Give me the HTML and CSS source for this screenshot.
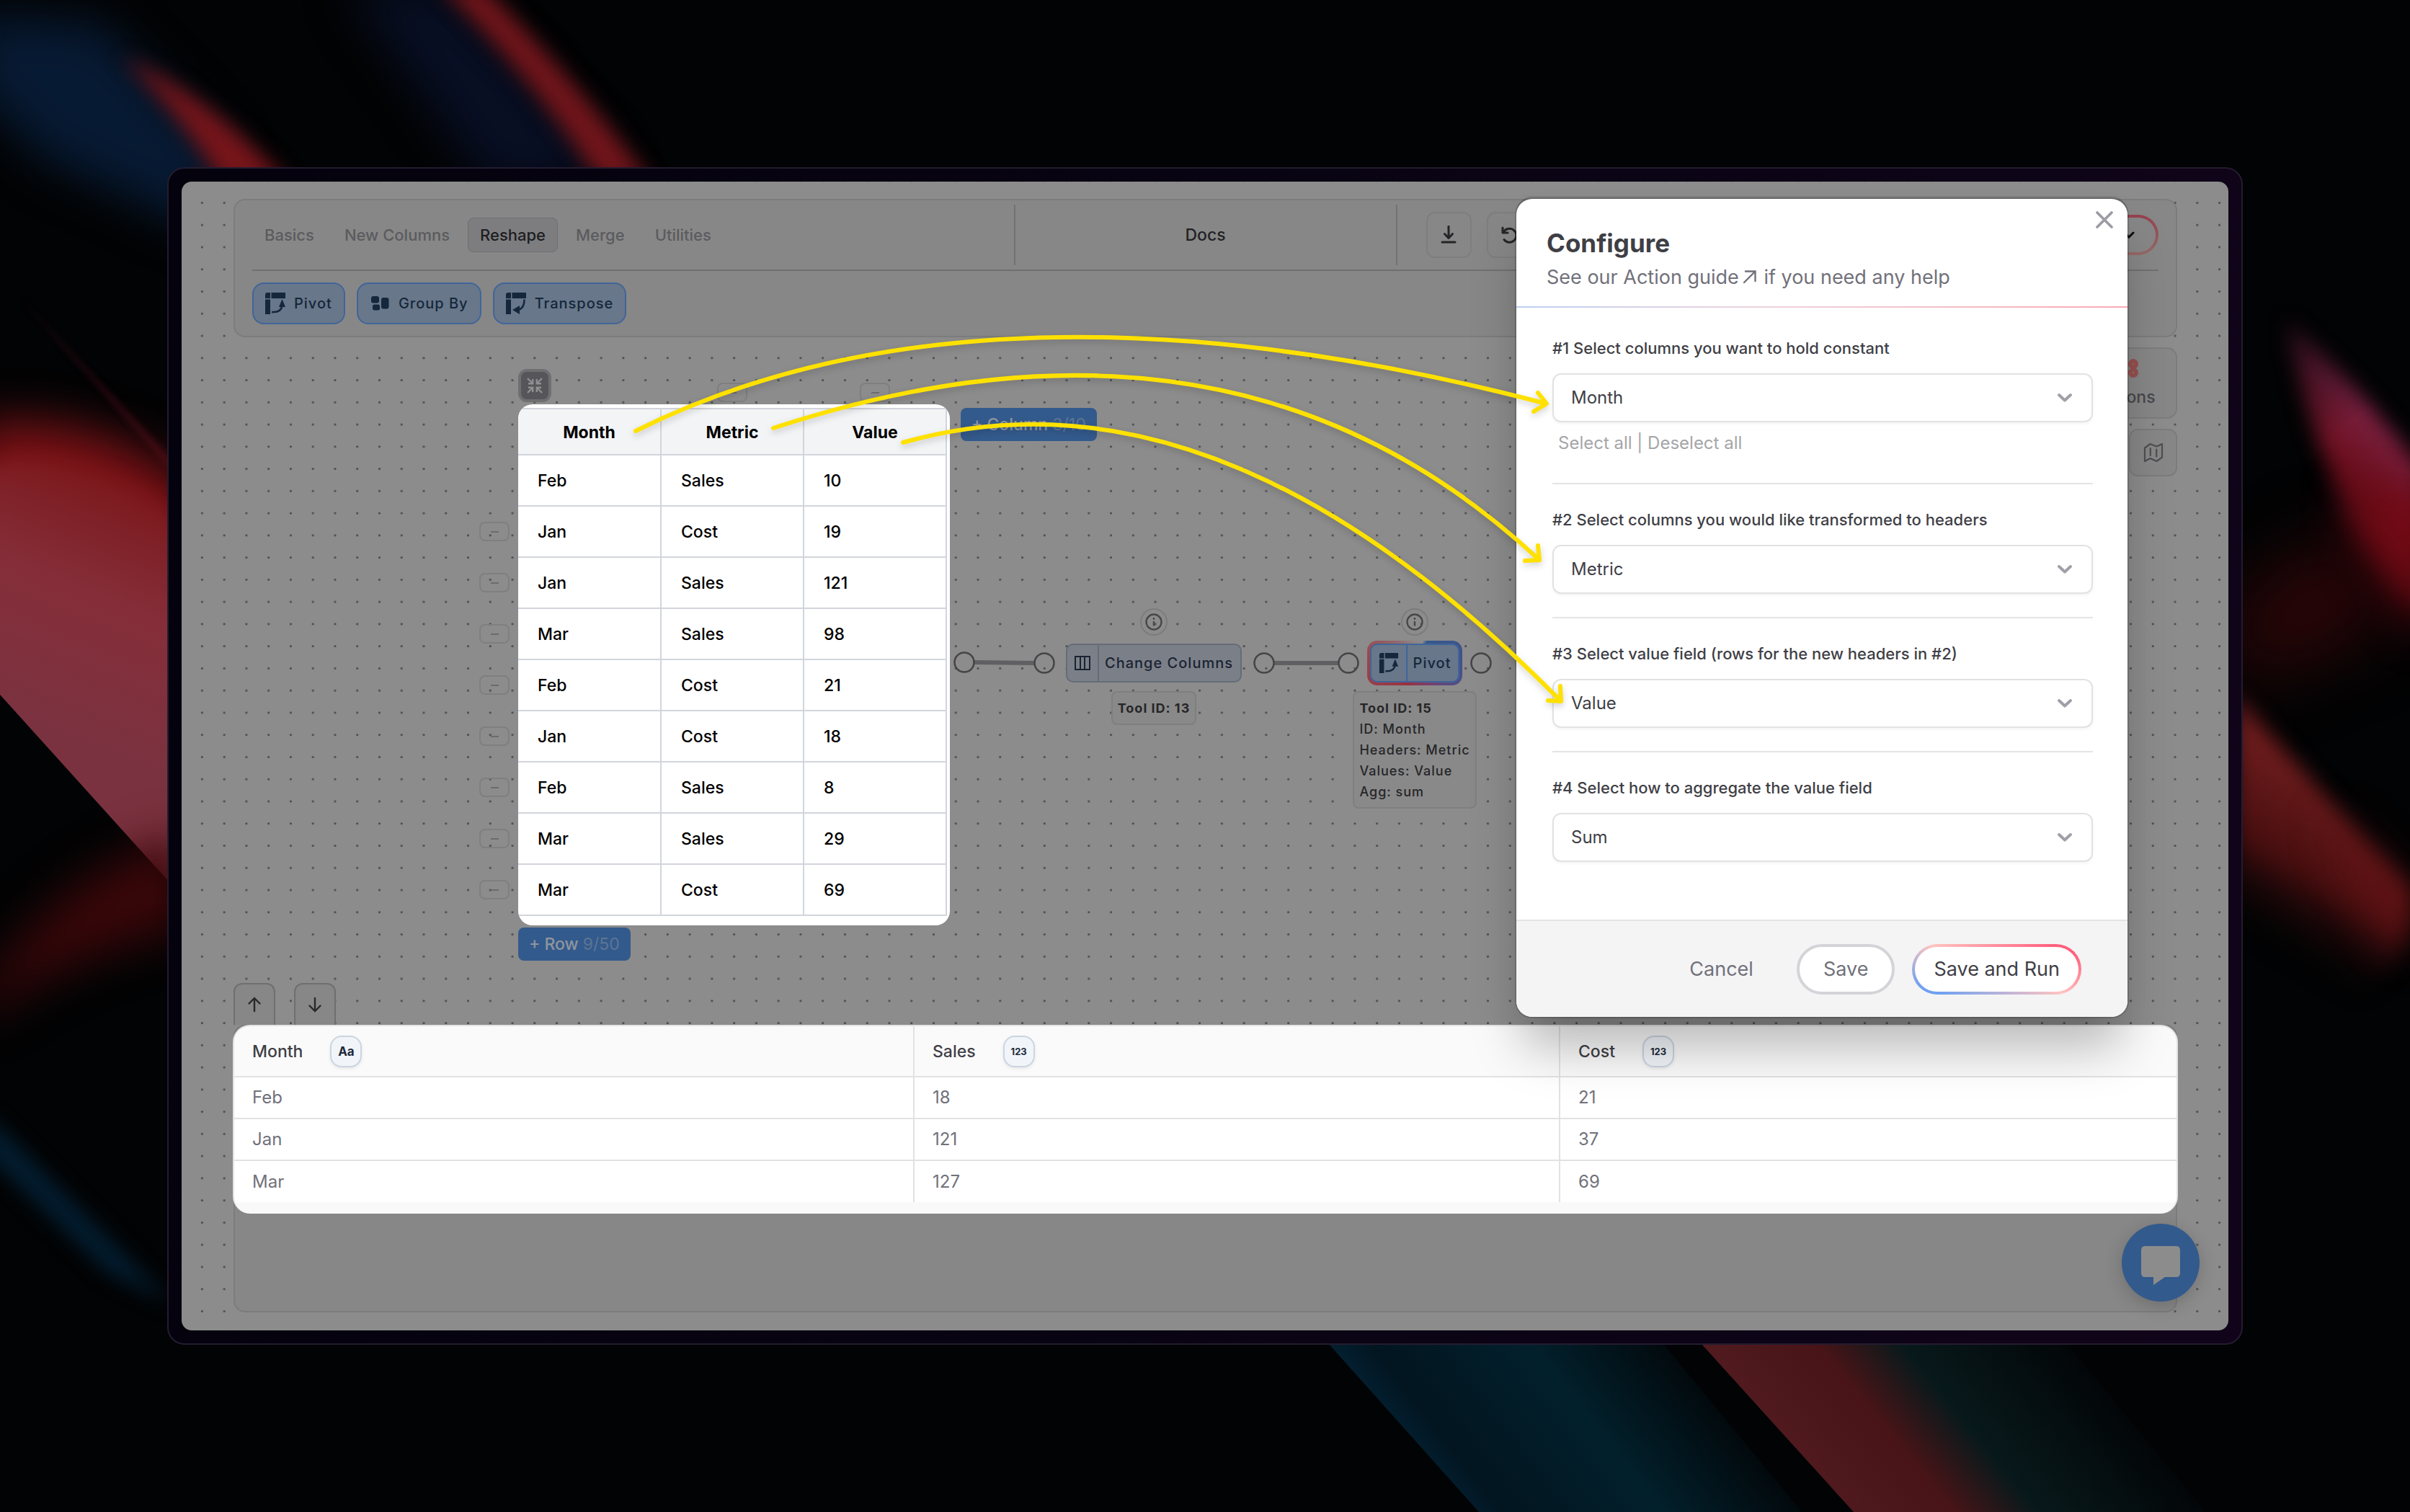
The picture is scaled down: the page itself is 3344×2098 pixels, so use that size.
FILE: index.html
```html
<!DOCTYPE html>
<html lang="en">
<head>
<meta charset="utf-8">
<title>Docs – Pivot</title>
<link rel="stylesheet" href="styles.css">
</head>
<body>
<svg class="wallpaper" viewBox="0 0 3344 2098" preserveAspectRatio="none" aria-hidden="true">
  <defs>
    <filter id="soft4" x="-50%" y="-50%" width="200%" height="200%"><feGaussianBlur stdDeviation="4"/></filter>
    <filter id="soft10" x="-50%" y="-50%" width="200%" height="200%"><feGaussianBlur stdDeviation="14"/></filter>
    <filter id="soft30" x="-50%" y="-50%" width="200%" height="200%"><feGaussianBlur stdDeviation="32"/></filter>
    <filter id="soft60" x="-80%" y="-80%" width="260%" height="260%"><feGaussianBlur stdDeviation="50"/></filter>
    <linearGradient id="petal" gradientUnits="userSpaceOnUse" x1="40" y1="1000" x2="200" y2="600">
      <stop offset="0" stop-color="#7b3240"/><stop offset=".45" stop-color="#852e39"/><stop offset=".8" stop-color="#7c1a1e"/><stop offset="1" stop-color="#66090c"/>
    </linearGradient>
    <linearGradient id="blueBand" gradientUnits="userSpaceOnUse" x1="1900" y1="1960" x2="2230" y2="1700">
      <stop offset="0" stop-color="#042235"/><stop offset=".15" stop-color="#021520"/><stop offset=".55" stop-color="#02202c"/><stop offset="1" stop-color="#020406"/>
    </linearGradient>
    <linearGradient id="redBand" gradientUnits="userSpaceOnUse" x1="2440" y1="1960" x2="2760" y2="1700">
      <stop offset="0" stop-color="#501a1f"/><stop offset=".3" stop-color="#481417"/><stop offset=".52" stop-color="#08191b"/><stop offset="1" stop-color="#020406"/>
    </linearGradient>
    <linearGradient id="redRight" gradientUnits="userSpaceOnUse" x1="3240" y1="1100" x2="3120" y2="1300">
      <stop offset="0" stop-color="#6b1b1c"/><stop offset=".5" stop-color="#470e0f"/><stop offset="1" stop-color="#020304" stop-opacity="0"/>
    </linearGradient>
    <linearGradient id="pinkRight" gradientUnits="userSpaceOnUse" x1="3344" y1="600" x2="3210" y2="760">
      <stop offset="0" stop-color="#7c2347"/><stop offset=".45" stop-color="#6b0f1d"/><stop offset="1" stop-color="#180304"/>
    </linearGradient>
    <linearGradient id="tipFade" gradientUnits="userSpaceOnUse" x1="3170" y1="440" x2="3270" y2="580">
      <stop offset="0" stop-color="#333"/><stop offset="1" stop-color="#fff"/>
    </linearGradient>
    <mask id="tip"><rect x="3100" y="300" width="300" height="800" fill="url(#tipFade)"/></mask>
  </defs>
  <rect width="3344" height="2098" fill="#020304"/>
  <path d="M-40 20L140 30L320 220L280 320L60 220L-40 120Z" fill="#071a33" filter="url(#soft30)"/>
  <path d="M170 80Q290 130 400 255L310 260Q260 170 170 80Z" fill="#76151a" filter="url(#soft10)"/>
  <path d="M480 -20L620 -20L860 250L680 260Z" fill="#080f24" filter="url(#soft30)"/>
  <path d="M610 -20L670 -20Q800 110 905 255L830 250Q740 110 610 -20Z" fill="#70151a" filter="url(#soft10)"/>
  <path d="M30 415L240 640L236 650Z" fill="#2e0a13" filter="url(#soft4)"/>
  <path d="M-40 590Q140 560 280 690L280 1000L-40 850Z" fill="#7c1216" filter="url(#soft30)"/>
  <path d="M-40 650Q130 610 280 750L280 1274L-40 928Z" fill="url(#petal)" filter="url(#soft10)"/>
  <path d="M-40 740L280 840V1274L0 964L-40 920Z" fill="url(#petal)"/>
  <path d="M-40 920L0 964L260 1252V1360L-40 1060Z" fill="#020304"/>
  <path d="M-40 1400Q80 1200 260 1160L260 1290Q120 1310 -40 1420Z" fill="#3a0709" filter="url(#soft30)"/>
  <path d="M-20 1545L240 1810L150 1765L-20 1600Z" fill="#031f33" filter="url(#soft10)"/>
  <g mask="url(#tip)"><path d="M3168 439Q3270 530 3364 655V850Q3240 760 3168 439Z" fill="url(#pinkRight)" filter="url(#soft10)"/></g>
  <path d="M3370 700L3370 880Q3290 800 3250 690Z" fill="#7a0a15" filter="url(#soft30)"/>
  <path d="M3100 840L3250 740L3320 860L3100 950Z" fill="#300608" filter="url(#soft60)"/>
  <path d="M3100 962L3344 1234Q3360 1400 3100 1440Z" fill="url(#redRight)" filter="url(#soft10)"/>
  <path d="M3230 1130L3344 1250V1320Q3290 1260 3230 1130Z" fill="#6a1216" filter="url(#soft30)"/>
  <path d="M1835 1855L2300 1855L2500 2098L2052 2098Z" fill="url(#blueBand)"/>
  <path d="M2352 1855L2860 1855L3060 2098L2572 2098Z" fill="url(#redBand)"/>
</svg>

<main class="device">
  <div class="screen">
    <svg class="dots" aria-hidden="true"><defs><pattern id="dot" x="13" y="14" width="30.76" height="30.76" patternUnits="userSpaceOnUse"><circle cx="15.4" cy="15.4" r="1.6" fill="#4d4d4f"/></pattern></defs><rect width="100%" height="100%" fill="url(#dot)"/></svg>

    <header class="toolbar">
      <div class="toolbar-top">
        <nav class="tabs" aria-label="Tool groups">
          <button class="tab">Basics</button>
          <button class="tab">New Columns</button>
          <button class="tab tab-active">Reshape</button>
          <button class="tab">Merge</button>
          <button class="tab">Utilities</button>
        </nav>
        <div class="doc-title"><span>Docs</span></div>
        <div class="actions">
          <button class="icon-button" aria-label="Download"><svg width="24" height="26" viewBox="0 0 24 26" fill="none" stroke="#252528" stroke-width="3"><path d="M12 1V17M6.500 11.500L12 17.500L17.500 11.500M3 23H21" stroke-linecap="round" stroke-linejoin="round"/></svg></button>
          <button class="icon-button" aria-label="Undo"><svg width="24" height="24" viewBox="0 0 24 24" fill="none" stroke="#252528" stroke-width="3" stroke-linecap="round" stroke-linejoin="round"><path d="M3 2V9H10M4 8.500A9.500 9.500 0 1 1 5 18.500"/></svg></button>
          <button class="run-button">Run <svg width="16" height="10" viewBox="0 0 16 10" fill="none" stroke="#0c0c0d" stroke-width="3" stroke-linecap="round"><path d="M2 2L8 8L14 2"/></svg></button>
        </div>
      </div>
      <div class="tools">
        <button class="tool"><svg width="28" height="30" viewBox="0 0 28 30" fill="#14273b"><path d="M0 3Q0 0 3 0H7V8H0ZM8.500 0H28V8H8.500ZM0 9.500H7V30H0Z"/><path d="M19 20L23.500 9L28 20Z"/><path d="M9 27Q22 28 23.500 18" fill="none" stroke="#14273b" stroke-width="2.500"/></svg>Pivot</button>
        <button class="tool"><svg width="28" height="20" viewBox="0 0 28 20" fill="#14273b"><rect x="2" width="11" height="9.500" rx="3"/><rect x="4" y="11.500" width="10" height="8" rx="2.500"/><rect x="16" y="2" width="10.500" height="15.500" rx="3"/></svg>Group By</button>
        <button class="tool"><svg width="28" height="30" viewBox="0 0 28 30" fill="#14273b"><path d="M0 3Q0 0 3 0H7V8H0ZM8.500 0H28V8H8.500ZM0 9.500H7V30H0Z"/><path d="M9 24L19 18V30Z"/><path d="M17 24.500Q26 21 25.500 9.500" fill="none" stroke="#14273b" stroke-width="2.500"/></svg>Transpose</button>
      </div>
    </header>

    <section class="canvas" aria-label="Workflow">
      <aside class="side-tools">
        <button class="side-card"><svg width="36" height="26" viewBox="0 0 36 26" fill="none" stroke="#96504f" stroke-width="6"><circle cx="9" cy="13" r="6"/><circle cx="29" cy="7" r="4"/><circle cx="29" cy="19" r="4"/></svg>Actions</button>
        <button class="side-map" aria-label="Map"><svg width="28" height="28" viewBox="0 0 28 28" fill="none" stroke="#4f4f52" stroke-width="2.200" stroke-linejoin="round"><path d="M2 7.500L9.500 2L18.500 5.500L26 2V20.500L18.500 26L9.500 22L2 26ZM9.800 8V18M18.200 9.500V19.500" stroke-linecap="round"/></svg></button>
      </aside>

      <div class="table-node">
        <div class="node-head">
          <button class="collapse" aria-label="Collapse"><svg width="22" height="22" viewBox="0 0 22 22" fill="none" stroke="#8f8f92" stroke-width="2.400"><path d="M1 1L7.500 7.500M2 8.200H8.200V2M21 1L14.500 7.500M20 8.200H13.800V2M1 21L7.500 14.500M2 13.800H8.200V20M21 21L14.500 14.500M20 13.800H13.800V20"/></svg></button>
          <button class="minus" aria-label="Remove Metric"></button>
          <button class="minus" aria-label="Remove Value"></button>
        </div>
        <div class="row-minuses">
          <button class="minus" aria-label="Remove row 2"></button>
          <button class="minus" aria-label="Remove row 3"></button>
          <button class="minus" aria-label="Remove row 4"></button>
          <button class="minus" aria-label="Remove row 5"></button>
          <button class="minus" aria-label="Remove row 6"></button>
          <button class="minus" aria-label="Remove row 7"></button>
          <button class="minus" aria-label="Remove row 8"></button>
          <button class="minus" aria-label="Remove row 9"></button>
        </div>
        <div class="input-card">
          <table class="input-table">
            <thead><tr><th>Month</th><th>Metric</th><th>Value</th></tr></thead>
            <tbody>
              <tr><td>Feb</td><td>Sales</td><td>10</td></tr>
              <tr><td>Jan</td><td>Cost</td><td>19</td></tr>
              <tr><td>Jan</td><td>Sales</td><td>121</td></tr>
              <tr><td>Mar</td><td>Sales</td><td>98</td></tr>
              <tr><td>Feb</td><td>Cost</td><td>21</td></tr>
              <tr><td>Jan</td><td>Cost</td><td>18</td></tr>
              <tr><td>Feb</td><td>Sales</td><td>8</td></tr>
              <tr><td>Mar</td><td>Sales</td><td>29</td></tr>
              <tr><td>Mar</td><td>Cost</td><td>69</td></tr>
            </tbody>
          </table>
        </div>
        <button class="add add-column">+ Column <span>3/10</span></button>
        <button class="add add-row">+ Row <span>9/50</span></button>
      </div>

      <svg class="wires" width="760" height="40" viewBox="1320 900 760 40" fill="none" stroke="#454547" stroke-width="2.500" aria-hidden="true">
        <path d="M1352 919L1435 920M1768 920H1857" stroke="#606062" stroke-width="6"/>
        <circle cx="1338" cy="919" r="13.500"/><circle cx="1449" cy="920" r="13.500"/><circle cx="1754" cy="920" r="13.500"/><circle cx="1871" cy="920" r="13.500"/><circle cx="2055" cy="920" r="13.500"/>
      </svg>

      <article class="node node-change">
        <button class="info" aria-label="Info"><svg width="24" height="24" viewBox="0 0 24 24" fill="none" stroke="#48484b" stroke-width="2.400"><circle cx="12" cy="12" r="10.500"/><path d="M12 11V17.500M12 6V8.800"/></svg></button>
        <button class="node-box"><span class="node-icon"><svg width="22" height="20" viewBox="0 0 22 20" fill="none" stroke="#1b2333" stroke-width="2"><rect x="1" y="1" width="20" height="18"/><path d="M8 1V19M14 1V19"/></svg></span><span class="node-name">Change Columns</span></button>
        <div class="note"><b>Tool ID: 13</b></div>
      </article>

      <article class="node node-pivot">
        <button class="info" aria-label="Info"><svg width="24" height="24" viewBox="0 0 24 24" fill="none" stroke="#48484b" stroke-width="2.400"><circle cx="12" cy="12" r="10.500"/><path d="M12 11V17.500M12 6V8.800"/></svg></button>
        <div class="halo"><button class="node-box node-box-blue"><span class="node-icon"><svg width="28" height="28" viewBox="0 0 28 30" fill="#14273b"><path d="M0 3Q0 0 3 0H7V8H0ZM8.500 0H28V8H8.500ZM0 9.500H7V30H0Z"/><path d="M19 20L23.500 9L28 20Z"/><path d="M9 27Q22 28 23.500 18" fill="none" stroke="#14273b" stroke-width="2.500"/></svg></span><span class="node-name">Pivot</span></button></div>
        <div class="note"><b>Tool ID: 15</b><br>ID: Month<br>Headers: Metric<br>Values: Value<br>Agg: sum</div>
      </article>
    </section>

    <section class="output" aria-label="Results">
      <div class="output-tabs">
        <button aria-label="Move up"><svg width="20" height="22" viewBox="0 0 20 22" fill="none" stroke="#29292c" stroke-width="2.400" stroke-linecap="round"><path d="M10 2V20M2.500 9.500L10 2L17.500 9.500"/></svg></button>
        <button aria-label="Move down"><svg width="20" height="22" viewBox="0 0 20 22" fill="none" stroke="#29292c" stroke-width="2.400" stroke-linecap="round"><path d="M10 2V20M2.500 12.500L10 20L17.500 12.500"/></svg></button>
      </div>
      <div class="output-panel">
        <div class="result-card">
          <table class="result">
            <colgroup><col class="col-month"><col class="col-sales"><col></colgroup>
            <thead><tr><th><span>Month<i>Aa</i></span></th><th><span>Sales<i class="num">123</i></span></th><th><span>Cost<i class="num">123</i></span></th></tr></thead>
            <tbody>
              <tr><td>Feb</td><td>18</td><td>21</td></tr>
              <tr><td>Jan</td><td>121</td><td>37</td></tr>
              <tr><td>Mar</td><td>127</td><td>69</td></tr>
            </tbody>
          </table>
        </div>
      </div>
    </section>

    <button class="chat" aria-label="Chat"><svg width="56" height="54" viewBox="0 0 56 54" fill="#8c8c8c"><path d="M6 0H50Q55 0 55 6V37Q55 43 50 43H34L18 54V43H6Q1 43 1 37V6Q1 0 6 0Z"/></svg></button>

    <form class="dialog" role="dialog" aria-labelledby="dialog-title">
      <div class="dialog-head">
        <button type="button" class="close" aria-label="Close"><svg width="26" height="26" viewBox="0 0 26 26" stroke="#9c9ca4" stroke-width="3.800" stroke-linecap="round"><path d="M3 3L23 23M23 3L3 23"/></svg></button>
        <h1 id="dialog-title">Configure</h1>
        <p>See our <a href="#guide">Action guide<svg width="20" height="20" viewBox="0 0 20 20" fill="none" stroke="#71717a" stroke-width="2.400" stroke-linecap="round"><path d="M2 18L17.500 2.500M4 2.500H17.500V16"/></svg></a> if you need any help</p>
      </div>
      <div class="dialog-body">
        <div class="field">
          <label for="constant">#1 Select columns you want to hold constant</label>
          <div class="select"><select id="constant"><option>Month</option></select><svg width="22" height="14" viewBox="0 0 22 14"><path d="M3 3L11 10.500L19 3"/></svg></div>
          <p class="bulk"><a href="#all">Select all</a> | <a href="#none">Deselect all</a></p>
        </div>
        <div class="field">
          <label for="headers">#2 Select columns you would like transformed to headers</label>
          <div class="select"><select id="headers"><option>Metric</option></select><svg width="22" height="14" viewBox="0 0 22 14"><path d="M3 3L11 10.500L19 3"/></svg></div>
        </div>
        <div class="field">
          <label for="value">#3 Select value field (rows for the new headers in #2)</label>
          <div class="select"><select id="value"><option>Value</option></select><svg width="22" height="14" viewBox="0 0 22 14"><path d="M3 3L11 10.500L19 3"/></svg></div>
        </div>
        <div class="field">
          <label for="aggregate">#4 Select how to aggregate the value field</label>
          <div class="select"><select id="aggregate"><option>Sum</option></select><svg width="22" height="14" viewBox="0 0 22 14"><path d="M3 3L11 10.500L19 3"/></svg></div>
        </div>
      </div>
      <div class="dialog-foot">
        <button type="button" class="cancel">Cancel</button>
        <button type="button" class="save">Save</button>
        <button type="submit" class="save-run">Save and Run</button>
      </div>
    </form>

    <svg class="arrows" viewBox="252 252 2840 1594" fill="none" stroke="#ffe100" stroke-width="6" stroke-linecap="round" stroke-linejoin="round" aria-hidden="true">
      <path d="M882 598C1230 424 1680 438 2145 560M2134 545L2146 560L2128 571"/>
      <path d="M1073 594Q1715 384 2136 777M2134 757L2136 777L2116 778"/>
      <path d="M1253 614Q1690 490 2166 973M2165 952L2166 973L2148 972"/>
    </svg>
  </div>
</main>
</body>
</html>
```
FILE: styles.css
```css
* { box-sizing: border-box; }

body {
  margin: 0;
  padding: 232px;
  background: #020304;
  color: #3f3f46;
  font-family: Inter, "Liberation Sans", sans-serif;
  font-size: 23px;
  line-height: 30px;
}

button, select { font: inherit; color: inherit; }
button { margin: 0; padding: 0; border: 0; background: none; }
a { color: inherit; text-decoration: none; }
svg { display: block; }

.wallpaper {
  position: absolute;
  z-index: -1;
  top: 0;
  left: 0;
  width: 100%;
  height: 100%;
}
.wallpaper feGaussianBlur { color-interpolation-filters: sRGB; }

.device {
  padding: 18px;
  border: 2px solid #241c30;
  border-radius: 24px;
  background: linear-gradient(100deg, #04020d, #0a0414 60%, #11041a);
}

.screen {
  position: relative;
  display: flex;
  flex-direction: column;
  padding: 24px 71px 25px 72px;
  border-radius: 14px;
  background: #8c8c8c;
}

.dots {
  position: absolute;
  top: 0;
  left: 0;
  width: 100%;
  height: 100%;
}

/* Toolbar */
.toolbar {
  position: relative;
  padding: 0 24px;
  height: 192px;
  border: 2px solid #7c7c7c;
  border-radius: 16px;
  background: #878787;
}
.toolbar-top {
  display: grid;
  grid-template-columns: 1fr 532px 1fr;
  align-items: center;
  height: 98px;
  border-bottom: 2px solid #707070;
}
.tabs { display: flex; gap: 8px; }
.tab {
  padding: 8px 16px;
  border: 1px solid transparent;
  border-radius: 8px;
  color: #5b5b5e;
  font-size: 22px;
  font-weight: 500;
}
.tab-active { border-color: #6f6f70; background: #7d7d80; color: #1d1d20; }
.doc-title {
  display: flex;
  align-items: center;
  justify-content: center;
  height: 84px;
  border: solid #727272;
  border-width: 0 2px;
  color: #222224;
  font-weight: 500;
}
.actions { display: flex; align-items: center; gap: 21px; padding-left: 40px; }
.icon-button {
  display: flex;
  align-items: center;
  justify-content: center;
  width: 63px;
  height: 64px;
  border: 2px solid #7e7e7e;
  border-radius: 12px;
}
.run-button {
  display: flex;
  align-items: center;
  gap: 12px;
  height: 56px;
  margin-left: auto;
  padding: 0 29px;
  border: 4px solid transparent;
  border-radius: 28px;
  background: linear-gradient(#878787, #878787) padding-box, linear-gradient(#96404f, #966a68) border-box;
}
.tools { display: flex; gap: 16px; padding-top: 16px; }
.tool {
  display: flex;
  align-items: center;
  gap: 12px;
  height: 58px;
  padding: 0 16px;
  border: 2px solid #41659a;
  border-radius: 16px;
  background: #687789;
  color: #14273b;
  font-size: 20px;
  font-weight: 500;
  letter-spacing: 1px;
}

/* Workflow canvas */
.canvas { position: relative; height: 896px; }
.side-tools {
  position: absolute;
  top: 14px;
  right: 0;
  display: flex;
  flex-direction: column;
  align-items: flex-end;
  gap: 14px;
}
.side-card {
  display: flex;
  flex-direction: column;
  align-items: center;
  justify-content: center;
  gap: 12px;
  width: 144px;
  height: 99px;
  border: 2px solid #7c7c7c;
  border-radius: 14px;
  background: #878787;
  color: #48484b;
  font-weight: 500;
}
.side-map {
  display: flex;
  align-items: center;
  justify-content: center;
  width: 67px;
  height: 66px;
  border: 2px solid #7c7c7c;
  border-radius: 12px;
  background: #878787;
}

.table-node {
  position: absolute;
  top: 44px;
  left: 341px;
  display: grid;
  grid-template-columns: 42px 599px auto;
  gap: 3px 12px;
  align-items: start;
}
.node-head {
  grid-column: 2;
  display: grid;
  grid-template-columns: 198px 198px 198px;
  align-items: end;
  justify-items: center;
}
.collapse {
  display: flex;
  align-items: center;
  justify-content: center;
  justify-self: start;
  width: 46px;
  height: 46px;
  border: 4px solid #6f6f71;
  border-radius: 12px;
  background: #56565a;
}
.minus {
  display: flex;
  align-items: center;
  justify-content: center;
  width: 42px;
  height: 27px;
  border: 2px solid #7f7f7f;
  border-radius: 8px;
}
.minus::before { content: ""; width: 11px; height: 2px; background: #6c6c6e; }
.row-minuses {
  grid-row: 2;
  display: grid;
  grid-auto-rows: 71px;
  align-items: center;
  padding-top: 141px;
}
.input-card {
  grid-area: 2 / 2;
  overflow: hidden;
  padding: 5px 4px 13px 0;
  border-radius: 20px;
  background: #fff;
}
.input-table {
  width: 100%;
  table-layout: fixed;
  border-collapse: collapse;
  color: #000;
}
.input-table th, .input-table td {
  height: 71px;
  padding: 0 0 0 27px;
  border: 2px solid #d1d5db;
  border-left: 0;
  text-align: left;
  font-weight: 500;
}
.input-table th {
  height: 64px;
  padding: 2px 0 0;
  background: #f3f4f6;
  text-align: center;
  font-weight: 700;
}
.add {
  height: 46px;
  padding: 0 15px;
  border-radius: 8px;
  background: #335a8c;
  color: #8f959d;
  font-weight: 500;
}
.add span { color: #5d7594; font-weight: 400; }
.add-column { grid-area: 2 / 3; margin: 5px 0 0 3px; }
.add-row { grid-area: 3 / 2; justify-self: start; }

.wires { position: absolute; top: 432px; left: 996px; }

.node {
  position: absolute;
  top: 376px;
  display: flex;
  flex-direction: column;
  align-items: center;
  width: 242px;
}
.node-change { left: 1156px; }
.node-pivot { left: 1518px; }
.info {
  display: flex;
  align-items: center;
  justify-content: center;
  width: 38px;
  height: 38px;
  border: 2px solid #7c7c7c;
  border-radius: 50%;
}
.node-box {
  display: flex;
  align-items: stretch;
  height: 54px;
  margin: 11px 0 12px;
  border: 2px solid #666c77;
  border-radius: 10px;
  background: #7b8088;
  color: #1b2333;
  font-size: 20px;
  font-weight: 500;
  letter-spacing: 1px;
  white-space: nowrap;
}
.node-icon {
  display: flex;
  align-items: center;
  padding: 0 10px;
  border-right: 2px solid #666c77;
}
.node-name { align-self: center; padding: 0 10px 0 8px; }
.halo {
  margin: 7px 0 8px;
  padding: 4px;
  border-radius: 14px;
  background: conic-gradient(from 30deg, #33588c 0deg, #4a5088 80deg, #7a3f6c 115deg, #98303f 170deg, #97484f 250deg, #8f8080 320deg, #8c8c8c 350deg, #33588c 360deg);
}
.node-box-blue {
  margin: 0;
  border-color: #41659a;
  background: #687789;
  color: #14273b;
}
.node-box-blue .node-icon { border-color: #41659a; }
.note {
  padding: 7px;
  border: 2px solid #7f7f7f;
  border-radius: 8px;
  background: #898989;
  color: #262628;
  font-size: 18px;
  font-weight: 500;
  line-height: 29px;
  letter-spacing: 1px;
}

/* Results */
.output { position: relative; }
.output-tabs { display: flex; gap: 26px; height: 58px; }
.output-tabs button {
  display: flex;
  align-items: center;
  justify-content: center;
  width: 58px;
  border: 2px solid #6f6f70;
  border-bottom: 0;
  border-radius: 12px 12px 0 0;
  background: #878787;
}
.output-panel {
  height: 399px;
  border: 2px solid #7c7c7c;
  border-radius: 16px;
  background: #878787;
}
.result-card {
  overflow: hidden;
  margin: -2px -3px;
  padding-bottom: 16px;
  border: 2px solid #e4e4e7;
  border-width: 2px 2px 0;
  border-radius: 24px;
  background: #f9f9f9;
}
.result {
  width: 100%;
  table-layout: fixed;
  border-collapse: collapse;
}
.col-month { width: 943px; }
.col-sales { width: 896px; }
.result th, .result td {
  height: 58px;
  padding: 0 0 0 25px;
  border-right: 2px solid #e2e2e5;
  border-bottom: 2px solid #e2e2e5;
  background: #fff;
  color: #71717a;
  text-align: left;
  font-weight: 400;
}
.result td { font-size: 24px; }
.result th:last-child, .result td:last-child { border-right: 0; }
.result tbody tr:last-child td { border-bottom: 0; }
.result th { height: 70px; background: #fafafa; color: #3f3f46; font-weight: 500; }
.result th span { display: flex; align-items: center; gap: 38px; }
.result i {
  display: flex;
  align-items: center;
  justify-content: center;
  width: 44px;
  height: 44px;
  border: 2px solid #cbd5e1;
  border-radius: 16px;
  background: #f1f5f9;
  box-shadow: 0 2px 4px #00000014;
  color: #1e293b;
  font-size: 17px;
  font-style: normal;
  font-weight: 700;
}
.result i.num { font-size: 13px; }

.chat {
  position: absolute;
  right: 40px;
  bottom: 40px;
  display: flex;
  align-items: center;
  justify-content: center;
  width: 108px;
  height: 108px;
  padding-top: 8px;
  border-radius: 50%;
  background: #335a8c;
  box-shadow: 0 6px 24px #00000030;
}

/* Dialog */
.dialog {
  position: absolute;
  top: 24px;
  right: 140px;
  width: 848px;
  border-radius: 22px;
  background: #fff;
  box-shadow: 0 0 0 2px #00000026, 0 -4px 0 0 #00000018, 0 50px 70px -10px #00000045;
}
.dialog-head {
  position: relative;
  height: 151px;
  padding: 37px 42px 0;
  border-bottom: 2px solid;
  border-image: linear-gradient(90deg, #bcd0f2, #eed3dc 40%, #f9aab4) 1;
}
.close { position: absolute; top: 16px; right: 19px; }
.dialog h1 {
  margin: 0;
  font-size: 35px;
  font-weight: 700;
  line-height: 48px;
}
.dialog-head p {
  margin: 6px 0 0;
  color: #71717a;
  font-size: 27px;
  line-height: 36px;
}
.dialog-head p svg { display: inline-block; margin: 0 2px 0 5px; }
.dialog-body { padding: 7px 48px 80px 50px; }
.field {
  padding: 34px 0 32px;
  border-bottom: 2px solid #e4e4e7;
}
.field:last-child { padding-bottom: 0; border-bottom: 0; }
.field label { display: block; margin-bottom: 20px; font-size: 22px; font-weight: 500; }
.select { position: relative; }
.select select {
  display: block;
  width: 100%;
  height: 68px;
  padding: 0 24px;
  appearance: none;
  border: 2px solid #e2e2e4;
  border-radius: 12px;
  background: #fff;
  box-shadow: 0 2px 4px #0000000c;
  font-size: 24px;
}
.select svg {
  position: absolute;
  top: 27px;
  right: 28px;
  fill: none;
  stroke: #9f9fa8;
  stroke-width: 4;
  stroke-linecap: round;
  stroke-linejoin: round;
}
.bulk { margin: 14px 0 8px 8px; color: #a5a5a9; font-size: 24px; line-height: 30px; }
.dialog-foot {
  display: flex;
  justify-content: flex-end;
  align-items: center;
  gap: 24px;
  padding: 32px 64px 31px;
  border-top: 2px solid #e4e4e7;
  border-radius: 0 0 22px 22px;
  background: #f4f4f5;
  color: #71717a;
  font-size: 27px;
}
.cancel { margin-right: 36px; }
.save, .save-run {
  height: 70px;
  padding: 0 33px;
  border: 4px solid #d4d4d8;
  border-radius: 35px;
  background: #fff;
}
.save-run {
  padding: 0 26px;
  border-color: transparent;
  background: linear-gradient(#fff, #fff) padding-box, linear-gradient(20deg, #6fa0f2 10%, #ffc4c0 50%, #ff5f7d 90%) border-box;
  color: #3f3f46;
}

.arrows {
  position: absolute;
  top: 0;
  left: 0;
  width: 100%;
  height: 100%;
  filter: drop-shadow(0 4px 5px #0000002e);
  pointer-events: none;
}
```
